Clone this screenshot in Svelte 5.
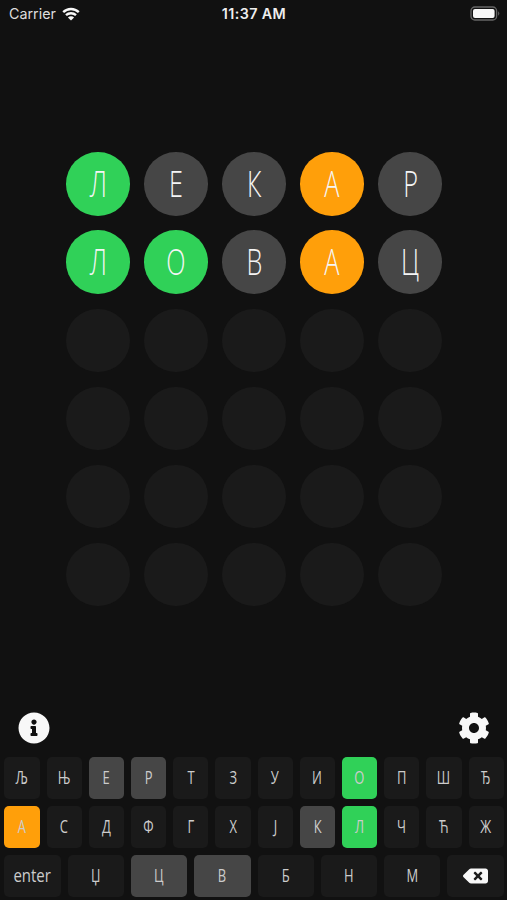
<script>
  // Letters already guessed, with the result for each one
  const guesses = [
    [["Л", "correct"], ["Е", "absent"], ["К", "absent"], ["А", "present"], ["Р", "absent"]],
    [["Л", "correct"], ["О", "correct"], ["В", "absent"], ["А", "present"], ["Ц", "absent"]],
  ];

  const emptyRow = Array(5).fill(["", "empty"]);
  const board = [...guesses, ...Array(4).fill(emptyRow)];

  const keyRows = [
    [..."ЉЊЕРТЗУИОПШЂ"],
    [..."АСДФГХЈКЛЧЋЖ"],
    ["enter", ..."ЏЦВБНМ", "delete"],
  ];

  // Best known result for every key
  const keyState = {};
  for (const [letter, result] of guesses.flat()) {
    keyState[letter] = result;
  }
</script>

<div class="screen">
  <header class="status">
    <div class="carrier">
      <span>Carrier</span>
      <svg class="wifi" viewBox="0 0 18 14">
        <path d="M1.2 5.2a11.2 11.2 0 0 1 15.6 0M4 8.2a7.2 7.2 0 0 1 10 0" />
        <path class="dot" d="M9 13.6 5.9 10.5a4.4 4.4 0 0 1 6.2 0z" />
      </svg>
    </div>
    <div class="time">11:37 AM</div>
    <div class="power">
      <svg class="battery" viewBox="0 0 31 15">
        <rect class="shell" x="1" y="1" width="25.6" height="13" rx="3.8" />
        <rect x="3" y="3" width="21.6" height="9" rx="2" />
        <path class="tip" d="M28.2 5.2a3 3 0 0 1 0 4.6z" />
      </svg>
    </div>
  </header>

  <main class="board">
    {#each board as row}
      {#each row as [letter, result]}
        <div class="tile {result}"><span>{letter}</span></div>
      {/each}
    {/each}
  </main>

  <nav class="tools">
    <button aria-label="info">
      <svg viewBox="0 0 512 512">
        <path d="M256 8C119.043 8 8 119.083 8 256c0 136.997 111.043 248 248 248s248-111.003 248-248C504 119.083 392.957 8 256 8zm0 110c23.196 0 42 18.804 42 42s-18.804 42-42 42-42-18.804-42-42 18.804-42 42-42zm56 254c0 6.627-5.373 12-12 12h-88c-6.627 0-12-5.373-12-12v-24c0-6.627 5.373-12 12-12h12v-64h-12c-6.627 0-12-5.373-12-12v-24c0-6.627 5.373-12 12-12h64c6.627 0 12 5.373 12 12v100h12c6.627 0 12 5.373 12 12v24z" />
      </svg>
    </button>
    <button aria-label="settings">
      <svg viewBox="0 0 512 512">
        <path d="M487.4 315.7l-42.6-24.6c4.3-23.2 4.3-47 0-70.2l42.6-24.6c4.9-2.8 7.1-8.6 5.5-14-11.1-35.6-30-67.8-54.7-94.6-3.8-4.1-10-5.1-14.8-2.3L380.8 110c-17.9-15.4-38.5-27.3-60.8-35.1V25.8c0-5.6-3.9-10.5-9.4-11.7-36.7-8.2-74.3-7.8-109.2 0-5.5 1.2-9.4 6.1-9.4 11.7V75c-22.2 7.9-42.8 19.8-60.8 35.1L88.7 85.5c-4.9-2.8-11-1.9-14.8 2.3-24.7 26.7-43.6 58.9-54.7 94.6-1.7 5.4.6 11.2 5.5 14L67.3 221c-4.3 23.2-4.3 47 0 70.2l-42.6 24.6c-4.9 2.8-7.1 8.6-5.5 14 11.1 35.6 30 67.8 54.7 94.6 3.8 4.1 10 5.1 14.8 2.3l42.6-24.6c17.9 15.4 38.5 27.3 60.8 35.1v49.2c0 5.6 3.9 10.5 9.4 11.7 36.7 8.2 74.3 7.8 109.2 0 5.5-1.2 9.4-6.1 9.4-11.7v-49.2c22.2-7.9 42.8-19.8 60.8-35.1l42.6 24.6c4.9 2.8 11 1.9 14.8-2.3 24.7-26.7 43.6-58.9 54.7-94.6 1.5-5.5-.7-11.3-5.6-14.1zM256 336c-44.1 0-80-35.9-80-80s35.9-80 80-80 80 35.9 80 80-35.9 80-80 80z" />
      </svg>
    </button>
  </nav>

  <footer class="keyboard">
    {#each keyRows as row}
      <div class="keys">
        {#each row as key}
          <button class="key {keyState[key] || 'empty'}" class:word={key === "enter"} aria-label={key}>
            {#if key === "delete"}
              <svg class="backspace" viewBox="0 0 640 512">
                <path d="M576 64H205.26A63.97 63.97 0 0 0 160 82.75L9.37 233.37c-12.5 12.5-12.5 32.76 0 45.25L160 429.25c12 12 28.28 18.75 45.25 18.75H576c35.35 0 64-28.65 64-64V128c0-35.35-28.65-64-64-64zm-84.69 254.06c6.25 6.25 6.25 16.38 0 22.63l-22.62 22.62c-6.25 6.25-16.38 6.25-22.63 0L384 301.25l-62.06 62.06c-6.25 6.25-16.38 6.25-22.63 0l-22.62-22.62c-6.25-6.25-6.25-16.38 0-22.63L338.75 256l-62.06-62.06c-6.25-6.25-6.25-16.38 0-22.63l22.62-22.62c6.25-6.25 16.38-6.25 22.63 0L384 210.75l62.06-62.06c6.25-6.25 16.38-6.25 22.63 0l22.62 22.62c6.25 6.25 6.25 16.38 0 22.63L429.25 256l62.06 62.06z" />
              </svg>
            {:else}
              <span>{key}</span>
            {/if}
          </button>
        {/each}
      </div>
    {/each}
  </footer>
</div>

<style>
  :global(body) {
    background: #111;
  }
  .screen {
    box-sizing: border-box;
    height: 900px;
    display: flex;
    flex-direction: column;
    background: #111;
    color: #f5f5f5;
    font-family: "Open Sans", "Noto Sans", sans-serif;
    overflow: hidden;
  }
  button {
    padding: 0;
    border: none;
    background: none;
    color: inherit;
    font: inherit;
  }
  svg {
    display: block;
    fill: #f8f8f8;
  }

  .status {
    display: grid;
    grid-template-columns: 1fr auto 1fr;
    align-items: center;
    height: 27px;
    padding: 0 6px 0 9px;
    font: 15px Inter, sans-serif;
  }
  .carrier {
    display: flex;
    align-items: center;
    gap: 6px;
    color: #ddd;
    font-size: 14.3px;
  }
  .wifi {
    width: 18px;
    height: 14px;
  }
  .wifi path {
    fill: none;
    stroke: #f8f8f8;
    stroke-width: 2.4;
  }
  .wifi .dot {
    fill: #f8f8f8;
    stroke: none;
  }
  .time {
    font-size: 14.3px;
    font-weight: 600;
    letter-spacing: 0.4px;
    margin-right: 2px;
    color: #eee;
  }
  .power {
    display: flex;
    justify-content: flex-end;
  }
  .battery {
    width: 31px;
    height: 15px;
  }
  .battery .shell {
    fill: none;
    stroke: #666;
    stroke-width: 1.3;
  }
  .battery .tip {
    fill: #666;
  }

  .board {
    display: grid;
    grid-template-columns: repeat(5, 63.6px);
    grid-auto-rows: 63.6px;
    gap: 14.5px;
    justify-content: center;
    margin-top: 125.4px;
    padding-left: 1px;
  }
  .tile {
    display: flex;
    align-items: center;
    justify-content: center;
    border-radius: 50%;
    font-size: 36px;
    font-weight: 350;
    line-height: 1;
  }
  .tile span {
    transform: translateY(-0.5px) scaleX(0.7);
  }
  .empty {
    background: #1a1a1a;
  }
  .absent {
    background: #464646;
  }
  .present {
    background: #ff9f0a;
  }
  .correct {
    background: #30d158;
  }

  .tools {
    display: flex;
    justify-content: space-between;
    margin-top: auto;
    padding: 0 17.5px 13px;
  }
  .tools svg {
    width: 32px;
    height: 32px;
  }

  .keyboard {
    display: flex;
    flex-direction: column;
    gap: 7px;
    padding: 0 3.2px 3px 4.3px;
  }
  .keys {
    display: flex;
    gap: 7px;
  }
  .key {
    flex: 1 1 0;
    min-width: 0;
    height: 42px;
    display: flex;
    align-items: center;
    justify-content: center;
    border-radius: 5px;
    color: #ccc;
    font-size: 18.5px;
    line-height: 1;
  }
  .key span {
    transform: translateY(-1px) scaleX(0.7);
    font-weight: 400;
  }
  .key.word span {
    transform: translateY(-1px) scaleX(0.81);
  }
  .backspace {
    width: 25px;
    height: 20px;
  }
</style>
